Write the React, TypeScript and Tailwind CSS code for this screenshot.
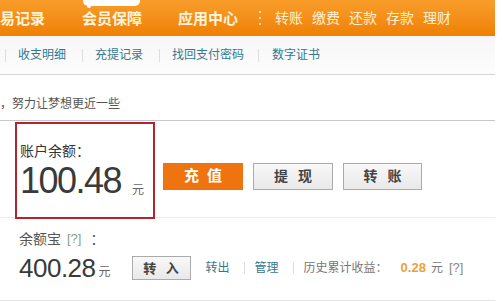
import React from 'react';

const FONT = { fontFamily: '"Liberation Sans", "Noto Sans CJK SC", sans-serif' };

const TopBar = () => (
  <div className="flex h-[36px] items-center bg-gradient-to-b from-[#f99d2a] to-[#ef8000] text-[15px] font-bold text-[#fff4dc]">
    <span className="leading-none">易记录</span>
    <span className="relative ml-[37px] leading-none">
      <span className="absolute left-[1px] top-[-11px] h-[6px] w-[57px] rounded-b-[5px] bg-white" />
      <span className="absolute left-[5px] top-[-6px] h-[3px] w-[4px] rounded-b-[2px] bg-white" />
      会员保障
    </span>
    <span className="ml-[36px] leading-none">应用中心</span>
    <span className="ml-[21px] flex h-[14px] flex-col justify-between">
      <span className="h-[2px] w-[2px] bg-[#ffd9a0]" />
      <span className="h-[2px] w-[2px] bg-[#ffd9a0]" />
      <span className="h-[2px] w-[2px] bg-[#ffd9a0]" />
    </span>
    <div className="ml-[14px] flex gap-[9px] text-[14px] font-normal leading-none text-[#fff0d0]">
      <span>转账</span>
      <span>缴费</span>
      <span>还款</span>
      <span>存款</span>
      <span>理财</span>
    </div>
  </div>
);

const Sep = ({ h = 'h-[13px]' }: { h?: string }) => <span className={`block w-px ${h} bg-[#dedede]`} />;

const SubNav = () => (
  <div className="flex h-[39px] items-center border-b border-[#d6d6d6] bg-gradient-to-b from-[#f6f6f6] to-[#fdfdfd] pl-[5px] text-[12px] text-[#34788f]">
    <Sep />
    <span className="ml-[12px]">收支明细</span>
    <span className="ml-[16px]"><Sep /></span>
    <span className="ml-[12px]">充提记录</span>
    <span className="ml-[16px]"><Sep /></span>
    <span className="ml-[12px]">找回支付密码</span>
    <span className="ml-[14px]"><Sep /></span>
    <span className="ml-[13px]">数字证书</span>
  </div>
);

const GrayButton = ({ label, w, h, size = 'text-[14px]' }: { label: string; w: string; h: string; size?: string }) => (
  <button className={`${w} ${h} border border-[#ababab] bg-gradient-to-b from-[#f8f8f8] to-[#e9e9e9] pl-[3px] ${size} font-bold tracking-[3px] text-[#444]`}>
    {label}
  </button>
);

const App = () => {
  return (
    <div className="h-[302px] w-[503px] overflow-hidden bg-white" style={FONT}>
      <div className="w-[495px]">
        <TopBar />
        <SubNav />

        <div className="h-[46px] border-b border-[#c8c8c8] pt-[19px] text-[12px] leading-[20px] text-[#555]">
          ，努力让梦想更近一些
        </div>

        <div className="flex h-[97px] items-start border-b border-[#ececec]">
          <div className="ml-[15px] mt-[1px] h-[97px] w-[140px] border-2 border-[#b1252c] pl-[3px] pt-[17px]">
            <div className="text-[14px] leading-[20px] text-[#333]">账户余额：</div>
            <div className="mt-[1px] flex items-end">
              <span className="text-[36px] leading-[38px] tracking-[-1.5px] text-[#3a3a3a]">100.48</span>
              <span className="mb-[2px] ml-[11px] text-[12px] leading-[16px] text-[#666]">元</span>
            </div>
          </div>
          <div className="ml-[8px] mt-[42px] flex gap-[10px]">
            <button className="h-[27px] w-[80px] bg-[#ef7410] pl-[2px] text-[15px] font-bold tracking-[2px] text-white">充 值</button>
            <GrayButton label="提 现" w="w-[80px]" h="h-[27px]" />
            <GrayButton label="转 账" w="w-[79px]" h="h-[27px]" />
          </div>
        </div>

        <div className="h-[83px] border-b border-[#e6e6e6] pl-[19px] pt-[11px]">
          <div className="flex items-center text-[14px] leading-[20px] text-[#555]">
            余额宝
            <span className="ml-[6px] text-[13px] text-[#86a08c]">[?]</span>
            <span className="ml-[9px]">：</span>
          </div>
          <div className="mt-[5px] flex items-center">
            <span className="text-[26px] leading-[28px] tracking-[-0.5px] text-[#3a3a3a]">400.28</span>
            <span className="ml-[3px] mt-[8px] text-[12px] text-[#666]">元</span>
            <span className="ml-[21px]">
              <GrayButton label="转 入" w="w-[59px]" h="h-[24px]" size="text-[13px]" />
            </span>
            <span className="ml-[15px] text-[12px] text-[#34788f]">转出</span>
            <span className="ml-[14px]"><Sep h="h-[12px]" /></span>
            <span className="ml-[10px] text-[12px] text-[#34788f]">管理</span>
            <span className="ml-[14px]"><Sep h="h-[12px]" /></span>
            <span className="ml-[10px] text-[12px] text-[#777]">历史累计收益：</span>
            <span className="ml-[13px] text-[13px] font-bold text-[#e9a23b]">0.28</span>
            <span className="ml-[5px] text-[12px] text-[#777]">元</span>
            <span className="ml-[6px] text-[13px] text-[#888]">[?]</span>
          </div>
        </div>
      </div>
    </div>
  );
};

export default App;
